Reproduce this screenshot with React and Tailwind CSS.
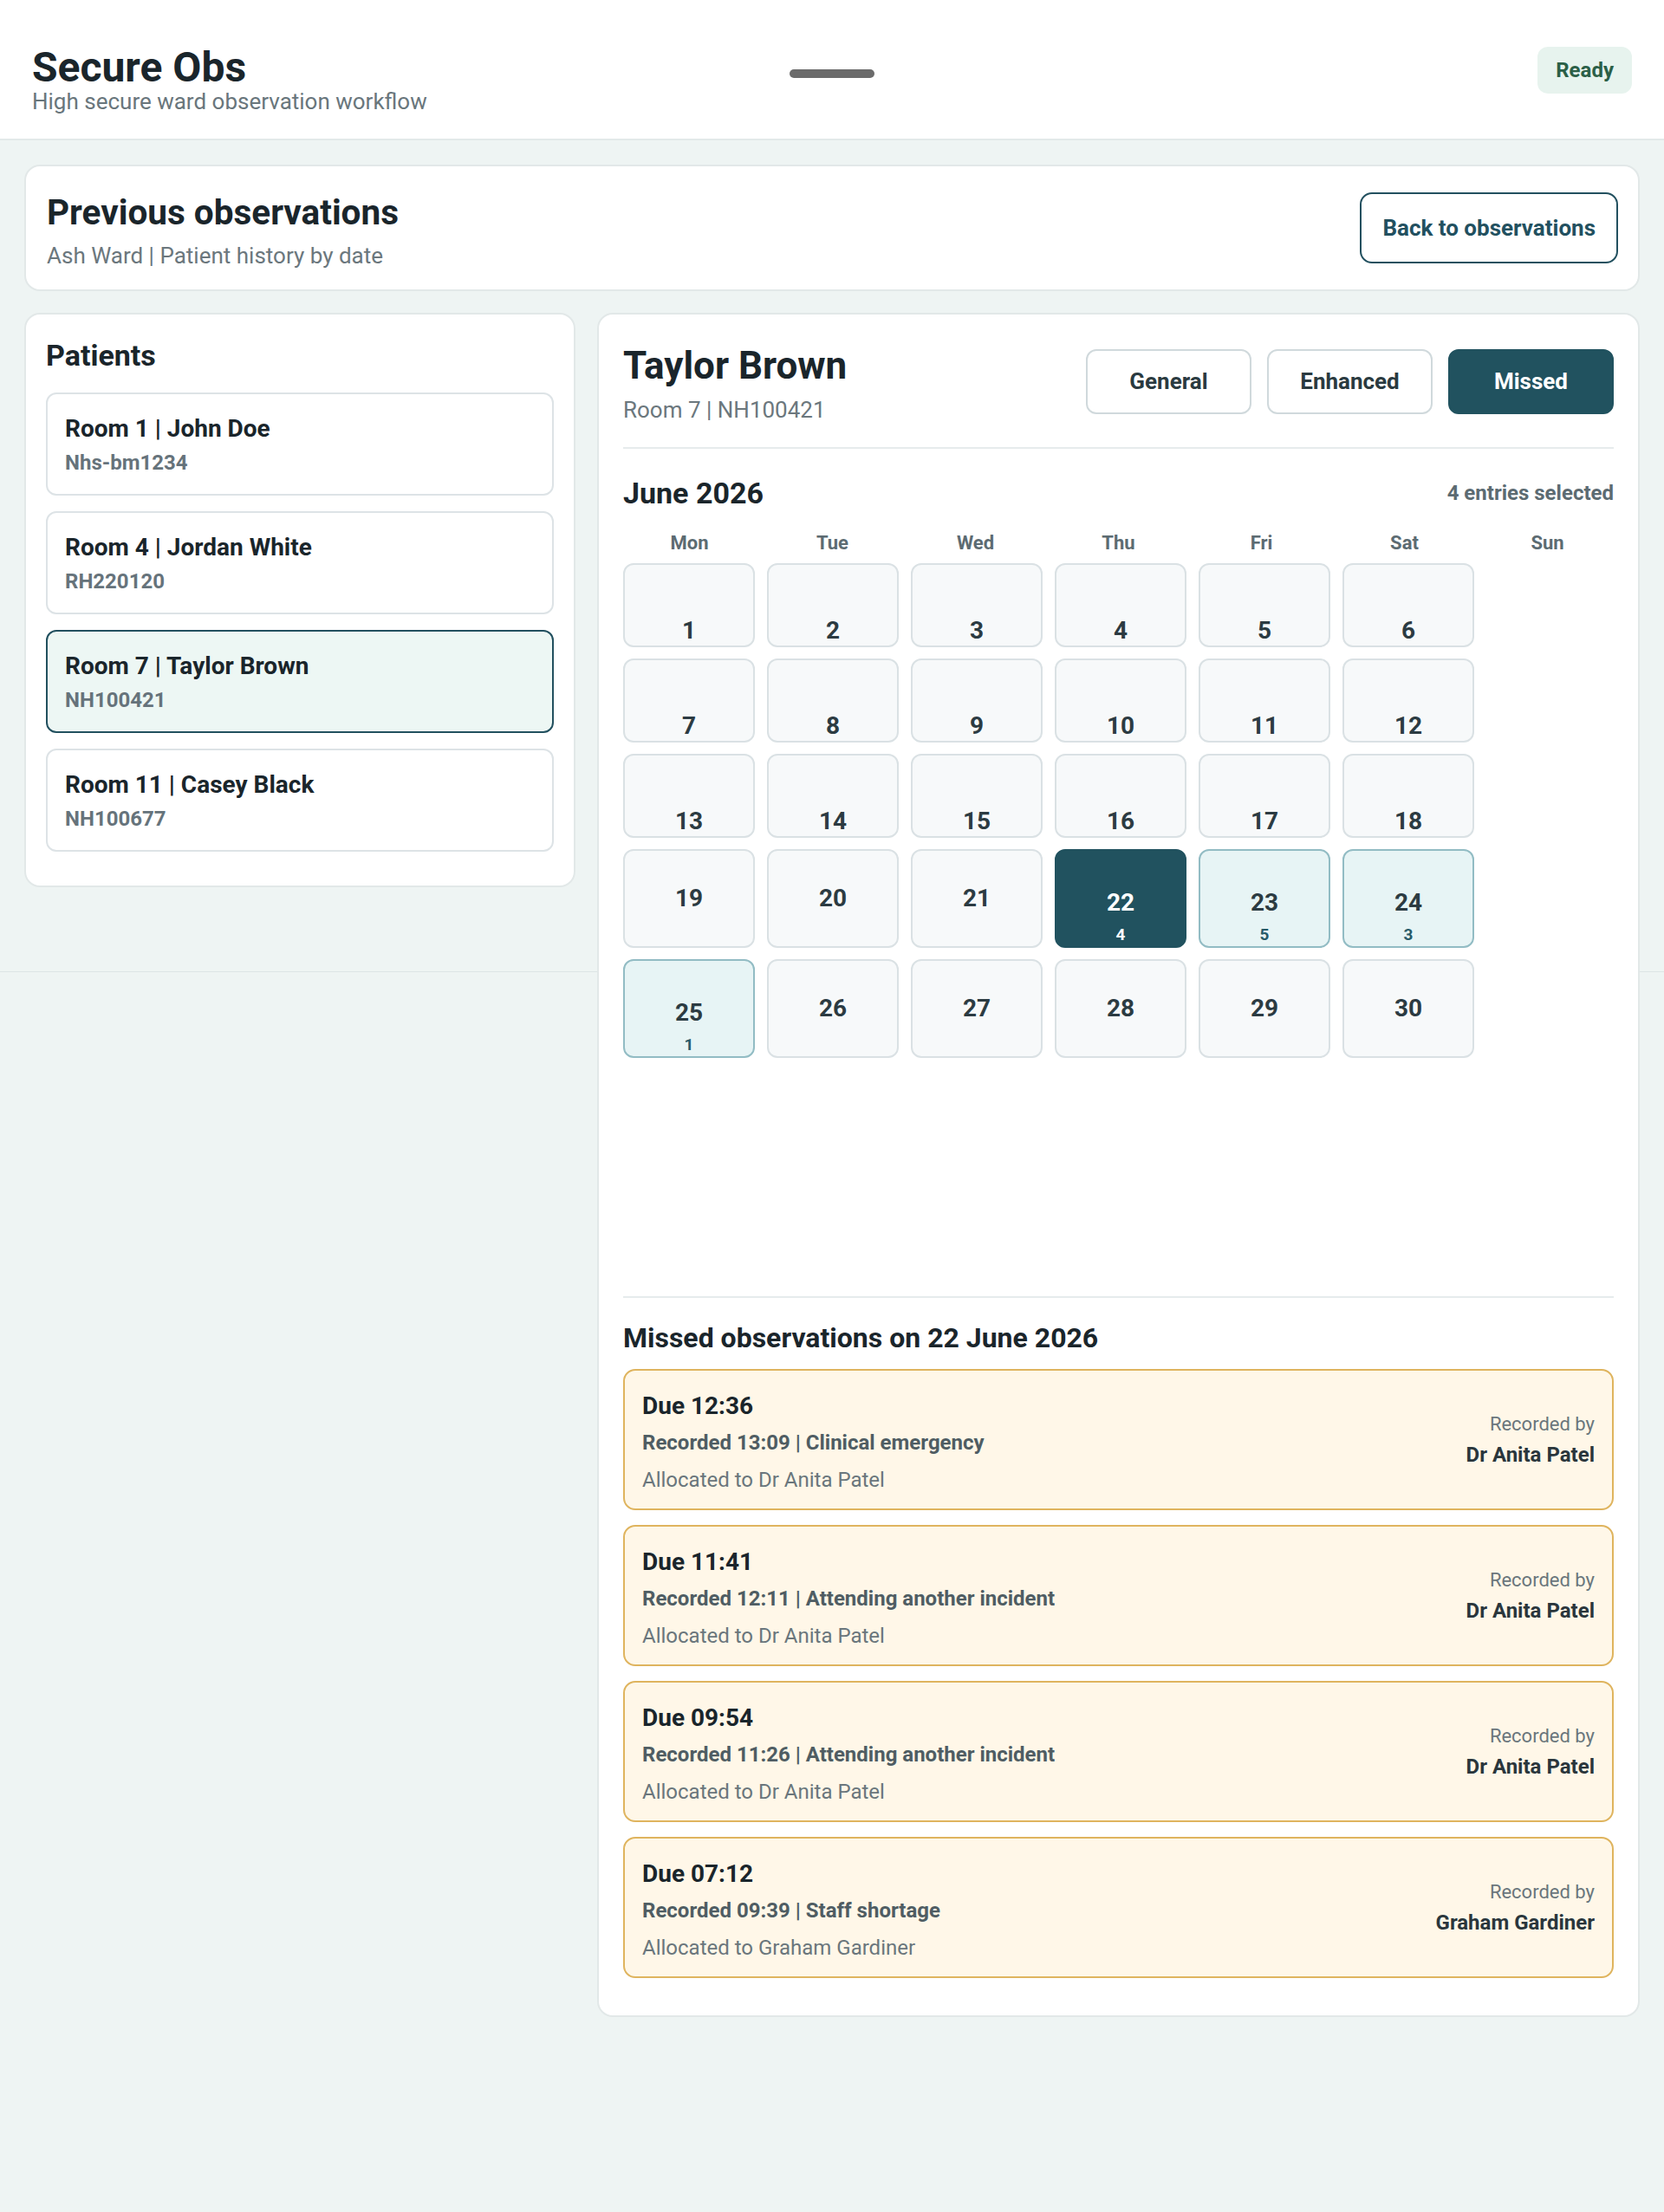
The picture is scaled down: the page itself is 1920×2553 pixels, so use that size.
import React, { useState } from "react";

const patients = [
  { id: 1, label: "Room 1 | John Doe", code: "Nhs-bm1234" },
  { id: 4, label: "Room 4 | Jordan White", code: "RH220120" },
  { id: 7, label: "Room 7 | Taylor Brown", code: "NH100421" },
  { id: 11, label: "Room 11 | Casey Black", code: "NH100677" },
];

const tabs = ["General", "Enhanced", "Missed"];
const weekDays = ["Mon", "Tue", "Wed", "Thu", "Fri", "Sat", "Sun"];
const counts = { 22: 4, 23: 5, 24: 3, 25: 1 };

const missed = [
  { due: "12:36", recorded: "13:09", reason: "Clinical emergency", by: "Dr Anita Patel" },
  { due: "11:41", recorded: "12:11", reason: "Attending another incident", by: "Dr Anita Patel" },
  { due: "09:54", recorded: "11:26", reason: "Attending another incident", by: "Dr Anita Patel" },
  { due: "07:12", recorded: "09:39", reason: "Staff shortage", by: "Graham Gardiner" },
];

// June 2026, six days per row (Sun column left empty)
const rows = [0, 1, 2, 3, 4].map((r) => [1, 2, 3, 4, 5, 6].map((c) => r * 6 + c));

const DayCell = ({ day, tall, selected, onSelect }) => {
  const count = counts[day];
  let tone = "bg-[#f7f9fa] border-[#dae1e4] text-[#2c3b42]";
  if (selected) tone = "bg-[#21525f] border-[#21525f] text-white";
  else if (count) tone = "bg-[#e7f4f5] border-[#92bcc4] text-[#2c3b42]";

  let align = "justify-end pb-[3px]";
  if (tall) align = count ? "justify-end pb-[4px]" : "justify-center";

  return (
    <button
      onClick={() => onSelect(day)}
      className={`flex flex-col items-center rounded-[12px] border-2 ${tone} ${align} ${
        tall ? "h-[114px]" : "h-[97px]"
      }`}
    >
      <span className="text-[28px] font-bold leading-none">{day}</span>
      {count && (
        <span
          className={`mt-[13px] text-[19px] font-bold leading-none ${
            selected ? "text-white" : "text-[#285a68]"
          }`}
        >
          {count}
        </span>
      )}
    </button>
  );
};

export default function App() {
  const [patient, setPatient] = useState(7);
  const [tab, setTab] = useState("Missed");
  const [day, setDay] = useState(22);

  return (
    <div className="relative min-h-screen bg-[#eef4f3] font-['Roboto',sans-serif] text-[#1a252b]">
      {/* faint page edge line behind content */}
      <div className="absolute left-0 top-[1121px] h-px w-full bg-[#dde5e5]" />

      {/* Header */}
      <header className="relative grid h-[162px] grid-cols-[1fr_auto_1fr] items-start border-b-2 border-[#e2e9e9] bg-white px-[37px]">
        <div className="pt-[54px]">
          <h1 className="text-[48px] font-bold leading-none">Secure Obs</h1>
          <p className="text-[26px] leading-[1.2] text-[#69767c]">
            High secure ward observation workflow
          </p>
        </div>
        <div className="mt-[80px] h-[10px] w-[98px] rounded-full bg-[#6b6b6b]" />
        <div className="mt-[54px] justify-self-end rounded-[12px] bg-[#e7f3ee] px-[21px] py-[12px] text-[24px] font-bold leading-[1.25] text-[#2b5f47]">
          Ready
        </div>
      </header>

      <main className="relative px-[28px] pt-[28px] pb-[60px]">
        {/* Page title card */}
        <section className="flex items-start justify-between rounded-[18px] border-2 border-[#e2e8e8] bg-white pt-[29px] pb-[22px] pl-[24px] pr-[23px]">
          <div>
            <h2 className="text-[40.5px] font-bold leading-[1.2]">Previous observations</h2>
            <p className="mt-[9px] text-[26px] leading-[1.3] text-[#6b777d]">
              Ash Ward | Patient history by date
            </p>
          </div>
          <button className="mt-px h-[82px] rounded-[14px] border-2 border-[#22505f] px-[24px] text-[26px] font-bold text-[#22505f]">
            Back to observations
          </button>
        </section>

        <div className="mt-[25px] grid grid-cols-[636px_1fr] items-start gap-[25px]">
          {/* Patients */}
          <aside className="rounded-[18px] border-2 border-[#e2e8e8] bg-white px-[23px] pt-[27px] pb-[39px]">
            <h3 className="text-[34px] font-bold leading-[1.2]">Patients</h3>
            <div className="mt-[22px] flex flex-col gap-[18px]">
              {patients.map((p) => (
                <button
                  key={p.id}
                  onClick={() => setPatient(p.id)}
                  className={`flex h-[119px] flex-col items-start justify-start rounded-[12px] border-2 px-[20px] pt-[23px] text-left ${
                    patient === p.id
                      ? "border-[#22505f] bg-[#edf7f4]"
                      : "border-[#dde3e6] bg-white"
                  }`}
                >
                  <div className="text-[28px] font-bold leading-[1.2]">{p.label}</div>
                  <div className="mt-[8px] text-[24px] font-bold leading-[1.2] text-[#66737b]">
                    {p.code}
                  </div>
                </button>
              ))}
            </div>
          </aside>

          {/* History */}
          <section className="rounded-[18px] border-2 border-[#e2e8e8] bg-white px-[28px] pt-[33px] pb-[43px]">
            <div className="flex items-start justify-between border-b-2 border-[#e6ebec] pb-[25px]">
              <div>
                <h3 className="text-[44px] font-bold leading-[1.2]">Taylor Brown</h3>
                <p className="mt-[8px] text-[26px] leading-[1.3] text-[#6b777d]">
                  Room 7 | NH100421
                </p>
              </div>
              <div className="mt-[7px] flex gap-[18px]">
                {tabs.map((t) => (
                  <button
                    key={t}
                    onClick={() => setTab(t)}
                    className={`h-[75px] w-[191px] rounded-[12px] border-2 text-[26px] font-bold ${
                      tab === t
                        ? "border-[#21525f] bg-[#21525f] text-white"
                        : "border-[#d0d9dc] bg-white text-[#2a3a40]"
                    }`}
                  >
                    {t}
                  </button>
                ))}
              </div>
            </div>

            {/* Calendar */}
            <div className="min-h-[978px] pt-[31px]">
              <div className="flex items-center justify-between">
                <h4 className="text-[34px] font-bold leading-[1.2]">June 2026</h4>
                <span className="text-[24px] font-bold leading-[1.2] text-[#5c6b72]">
                  4 entries selected
                </span>
              </div>
              <div className="mt-[24px] grid grid-cols-7 gap-x-[12px]">
                {weekDays.map((w) => (
                  <div key={w} className="text-center text-[22px] font-bold leading-[1.2] text-[#5c6b72]">
                    {w}
                  </div>
                ))}
              </div>
              <div className="mt-[10px] grid grid-cols-[repeat(6,152px)_1fr] gap-x-[14px] gap-y-[13px]">
                {rows.map((row, ri) => (
                  <React.Fragment key={ri}>
                    {row.map((d) => (
                      <DayCell
                        key={d}
                        day={d}
                        tall={ri >= 3}
                        selected={day === d}
                        onSelect={setDay}
                      />
                    ))}
                    <div />
                  </React.Fragment>
                ))}
              </div>
            </div>

            {/* Missed list */}
            <div className="border-t-2 border-[#e6ebec] pt-[27px]">
              <h4 className="text-[32px] font-bold leading-[1.2]">
                Missed observations on {day} June 2026
              </h4>
              <div className="mt-[17px] flex flex-col gap-[17px]">
                {missed.map((m) => (
                  <div
                    key={m.due}
                    className="flex h-[163px] items-center justify-between rounded-[14px] border-2 border-[#dfb45e] bg-[#fff7e8] px-[20px]"
                  >
                    <div className="self-start pt-[24px]">
                      <div className="text-[28px] font-bold leading-[1.2]">Due {m.due}</div>
                      <div className="mt-[10px] text-[24px] font-bold leading-[1.25] text-[#4f5d63]">
                        Recorded {m.recorded} | {m.reason}
                      </div>
                      <div className="mt-[13px] text-[24px] leading-[1.25] text-[#6a767c]">
                        Allocated to {m.by}
                      </div>
                    </div>
                    <div className="text-right">
                      <div className="text-[22px] leading-[1.25] text-[#6a767c]">Recorded by</div>
                      <div className="mt-[6px] text-[24px] font-bold leading-[1.25] text-[#2a363c]">
                        {m.by}
                      </div>
                    </div>
                  </div>
                ))}
              </div>
            </div>
          </section>
        </div>
      </main>
    </div>
  );
}
